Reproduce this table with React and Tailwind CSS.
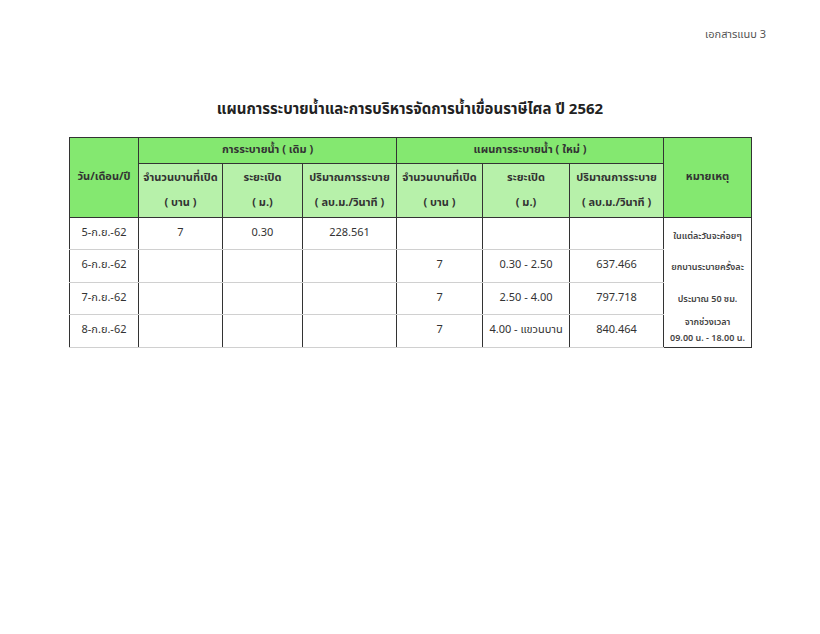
import React from 'react';

const rows = [
    { date: '5-ก.ย.-62', a: ['7', '0.30', '228.561'], b: ['', '', ''], note: ['ในแต่ละวันจะค่อยๆ'], h: 'h-[32px]', pad: 'pt-[6px] leading-[15px]' },
    { date: '6-ก.ย.-62', a: ['', '', ''], b: ['7', '0.30 - 2.50', '637.466'], note: ['ยกบานระบายครั้งละ'], h: 'h-[33px]', pad: 'pt-[4px] leading-[15px]' },
    { date: '7-ก.ย.-62', a: ['', '', ''], b: ['7', '2.50 - 4.00', '797.718'], note: ['ประมาณ 50 ซม.'], h: 'h-[32px]', pad: 'pt-[2px] leading-[15px]' },
    { date: '8-ก.ย.-62', a: ['', '', ''], b: ['7', '4.00 - แขวนบาน', '840.464'], note: ['จากช่วงเวลา', '09.00 น. - 18.00 น.'], h: 'h-[33px]', pad: 'pt-0 leading-[16px]' },
];

const subHead = [
    ['จำนวนบานที่เปิด', '( บาน )'],
    ['ระยะเปิด', '( ม.)'],
    ['ปริมาณการระบาย', '( ลบ.ม./วินาที )'],
];

export default function App() {
    return (
        <div
            className="w-[820px] h-[634px] bg-white text-[#333] relative"
            style={{ fontFamily: 'Tahoma, "Noto Sans Thai", "Noto Sans", "DejaVu Sans", sans-serif' }}
        >
            <div className="flex justify-end pt-[27px] pr-[54px] text-[11px] text-[#555]">เอกสารแนบ 3</div>
            <h1 className="mt-[56px] text-center text-[15px] leading-[20px] font-bold text-[#222]">
                แผนการระบายน้ำและการบริหารจัดการน้ำเขื่อนราษีไศล ปี 2562
            </h1>
            <div className="mt-[17px] ml-[69px]">
                <table className="border-collapse table-fixed w-[682px] text-[11px] border-[1.5px] border-[#333]">
                    <colgroup>
                        <col className="w-[69px]" />
                        <col className="w-[84px]" />
                        <col className="w-[80px]" />
                        <col className="w-[94px]" />
                        <col className="w-[86px]" />
                        <col className="w-[87px]" />
                        <col className="w-[94px]" />
                        <col className="w-[88px]" />
                    </colgroup>
                    <thead>
                        <tr className="h-[26px] bg-[#84e870]">
                            <th rowSpan={3} className="border border-[#333] font-bold text-[11px]">วัน/เดือน/ปี</th>
                            <th colSpan={3} className="border border-[#333] font-bold">การระบายน้ำ ( เดิม )</th>
                            <th colSpan={3} className="border border-[#333] font-bold">แผนการระบายน้ำ ( ใหม่ )</th>
                            <th rowSpan={3} className="border border-[#333] font-bold">หมายเหตุ</th>
                        </tr>
                        <tr className="h-[27px] bg-[#b7f1aa]">
                            {[...subHead, ...subHead].map((s, i) => (
                                <th key={i} className="border-x border-t border-[#333] font-bold pt-[2px]">{s[0]}</th>
                            ))}
                        </tr>
                        <tr className="h-[27px] bg-[#b7f1aa]">
                            {[...subHead, ...subHead].map((s, i) => (
                                <th key={i} className="border-x border-b border-[#333] font-bold">{s[1]}</th>
                            ))}
                        </tr>
                    </thead>
                    <tbody>
                        {rows.map((r, i) => (
                            <tr key={i} className={r.h}>
                                <td className="border-x border-[#333] border-b border-b-[#d0d0d0] text-center">{r.date}</td>
                                {[...r.a, ...r.b].map((v, j) => (
                                    <td key={j} className="border-x border-[#333] border-b border-b-[#d0d0d0] text-center">{v}</td>
                                ))}
                                <td className={`border-x border-[#333] text-center text-[9px] font-semibold text-[#444] ${r.pad}`}>
                                    {r.note.map((n, k) => (
                                        <div key={k}>{n}</div>
                                    ))}
                                </td>
                            </tr>
                        ))}
                    </tbody>
                </table>
            </div>
        </div>
    );
}
